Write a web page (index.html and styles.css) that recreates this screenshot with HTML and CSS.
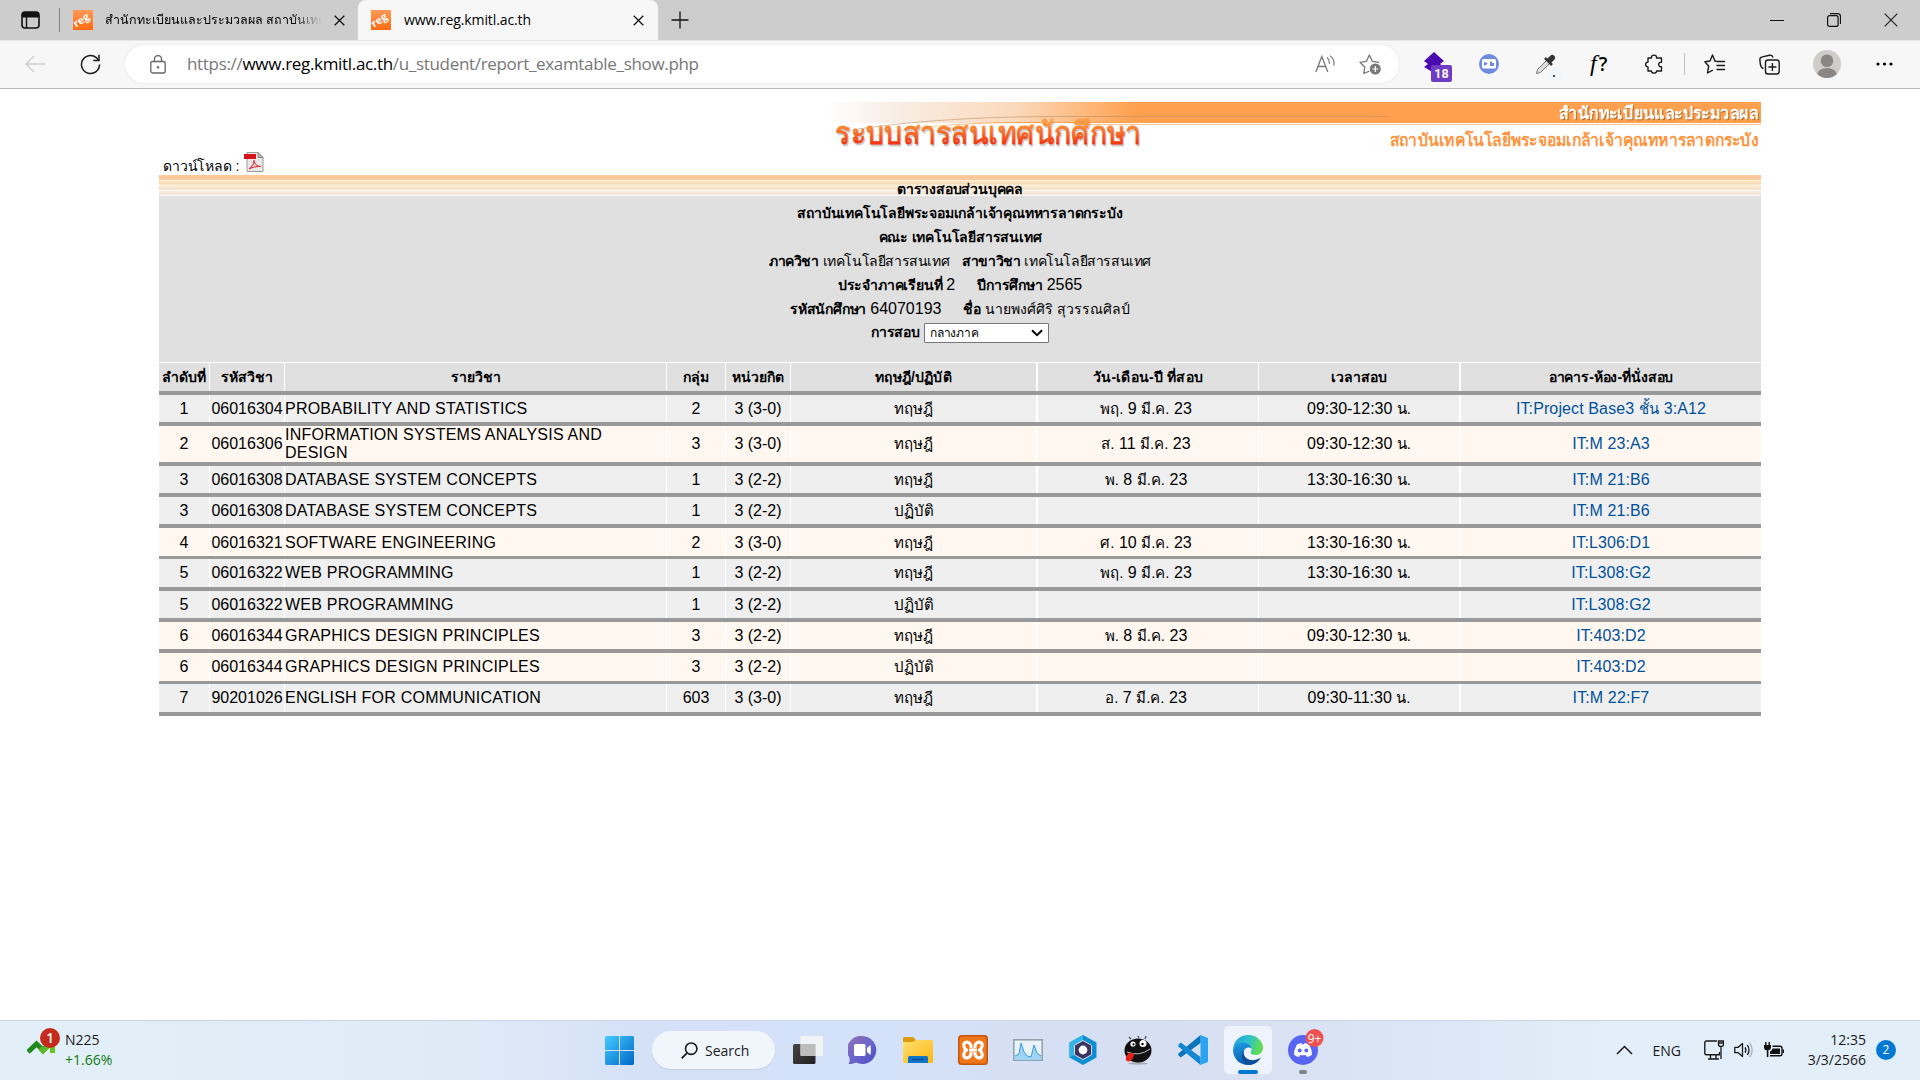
FILE: index.html
```html
<!DOCTYPE html>
<html lang="th">
<head>
<meta charset="utf-8">
<title>www.reg.kmitl.ac.th</title>
<link rel="stylesheet" href="styles.css">
</head>
<body>
<div class="browser">
  <header class="tabstrip">
    <div class="tab-actions">
      <svg width="19" height="18" viewBox="0 0 19 18"><rect x="1" y="1" width="17" height="16" rx="3" fill="none" stroke="#111" stroke-width="1.6"/><path d="M1 4a3 3 0 0 1 3-3h11a3 3 0 0 1 3 3v2.500H1z" fill="#111"/><path d="M5.500 6v11" stroke="#111" stroke-width="1.400"/></svg>
    </div>
    <div class="tab">
      <svg class="favicon" width="20" height="20" viewBox="0 0 20 20"><rect width="20" height="20" fill="url(#fav)"/><text x="1.500" y="15.500" transform="rotate(-32 6 14)" font-family="Open Sans, sans-serif" font-size="10.500" font-weight="700" fill="#fff">reg</text></svg>
      <span class="tab-title faded">สำนักทะเบียนและประมวลผล สถาบันเทคโน</span>
      <svg class="x" width="11" height="11" viewBox="0 0 11 11"><path d="M.7.700l9.600 9.600M10.300.700L.700 10.300" stroke="#111" stroke-width="1.300"/></svg>
    </div>
    <div class="tab active">
      <svg class="favicon" width="20" height="20" viewBox="0 0 20 20"><defs><linearGradient id="fav" x1="0" y1="0" x2="0" y2="1"><stop offset="0" stop-color="#ff9a58"/><stop offset="1" stop-color="#ff6a10"/></linearGradient></defs><rect width="20" height="20" fill="url(#fav)"/><text x="1.500" y="15.500" transform="rotate(-32 6 14)" font-family="Open Sans, sans-serif" font-size="10.500" font-weight="700" fill="#fff">reg</text></svg>
      <span class="tab-title">www.reg.kmitl.ac.th</span>
      <svg class="x" width="11" height="11" viewBox="0 0 11 11"><path d="M.7.700l9.600 9.600M10.300.700L.700 10.300" stroke="#111" stroke-width="1.300"/></svg>
    </div>
    <svg class="newtab" width="18" height="18" viewBox="0 0 18 18"><path d="M9 .5v17M.5 9h17" stroke="#111" stroke-width="1.300"/></svg>
    <div class="winctl">
      <svg width="14" height="14" viewBox="0 0 14 14"><path d="M0 7.500h14" stroke="#111"/></svg>
      <svg width="14" height="14" viewBox="0 0 14 14"><rect x=".6" y="2.600" width="10.500" height="10.800" rx="2" fill="none" stroke="#111" stroke-width="1.200"/><path d="M3 .7h7.500a3 3 0 0 1 3 3V11" fill="none" stroke="#111" stroke-width="1.200"/></svg>
      <svg width="14" height="14" viewBox="0 0 14 14"><path d="M.7.700l12.600 12.600M13.300.700L.700 13.300" stroke="#222" stroke-width="1.200"/></svg>
    </div>
  </header>
  <nav class="toolbar">
    <svg class="back" width="20" height="18" viewBox="0 0 20 18"><path d="M9 1L1 9l8 8M1 9h19" fill="none" stroke="#cfcfcf" stroke-width="1.400"/></svg>
    <svg class="reload" width="21" height="21" viewBox="0 0 21 21"><path d="M19.500 10.500a9 9 0 1 1-3.200-6.900L18.500 6" fill="none" stroke="#1a1a1a" stroke-width="1.500"/><path d="M19 .8v5.700h-5.700" fill="none" stroke="#1a1a1a" stroke-width="1.500"/></svg>
    <div class="address">
      <svg class="lock" width="16" height="19" viewBox="0 0 16 19"><rect x=".8" y="6.500" width="14.400" height="11.500" rx="2" fill="none" stroke="#666" stroke-width="1.300"/><path d="M4.500 6.500V4a3.500 3.500 0 0 1 7 0v2.500" fill="none" stroke="#666" stroke-width="1.300"/><circle cx="8" cy="12.300" r="1.200" fill="#666"/></svg>
      <span class="url">https://<b>www.reg.kmitl.ac.th</b>/u_student/report_examtable_show.php</span>
      <svg class="aloud" width="20" height="18" viewBox="0 0 20 18"><path d="M.8 17L6.800 1.500 12.800 17M3 11.500h7.700" fill="none" stroke="#777" stroke-width="1.300"/><path d="M12 2.500c2 1.700 2.700 4 2.300 6.300M15 .6c3.500 2.800 4.600 6.300 3.800 10" fill="none" stroke="#777" stroke-width="1.200"/></svg>
      <svg class="addfav" width="23" height="21" viewBox="0 0 23 21"><path d="M10.500 17L4.800 19.500l.9-6.500L1 8.300l6.500-1L10.300 1l3 6.300 6.700 1" fill="none" stroke="#777" stroke-width="1.300" stroke-linejoin="round"/><circle cx="16.300" cy="15" r="5.500" fill="#777"/><path d="M16.300 12v6M13.300 15h6" stroke="#fff" stroke-width="1.200"/></svg>
    </div>
    <svg class="e1" width="28" height="30" viewBox="0 0 28 30"><path d="M0 9l10-9 10 9-4 3 4 3-10 6-10-6 4-3z" fill="#4a0ab0"/><rect x="7" y="13" width="21" height="17" rx="2" fill="#6f3cc4"/><text x="17.500" y="26.300" text-anchor="middle" font-family="Roboto, sans-serif" font-size="12.500" font-weight="700" fill="#fff">18</text></svg>
    <svg class="e2" width="20" height="20" viewBox="0 0 20 20"><circle cx="10" cy="10" r="10" fill="#6f8be0"/><rect x="3" y="5" width="14" height="9.500" rx="1.500" fill="#fff"/><path d="M5 7.500l4 2.300-4 2.300zM11 7.500h2v1.500h2v3h-4z" fill="#6f8be0"/></svg>
    <svg class="e3" width="27" height="27" viewBox="0 0 27 27"><path d="M1.500 19.500l1-4 9.500-9.500 3 3-9.500 9.500z" fill="#ddd" stroke="#777"/><path d="M10 4l7 7" stroke="#333" stroke-width="2.500"/><path d="M13 5.500L16 2.500a1.500 1.500 0 0 1 2.500 2.500L15.500 8z" fill="#333" stroke="#333" stroke-width="2"/><rect x="13" y="14" width="13.500" height="12.500" rx="2" fill="#f1f6fa"/><circle cx="19" cy="22" r="1" fill="#111"/></svg>
    <span class="fq"><em>f</em>?</span>
    <svg class="puzzle" width="18" height="20" viewBox="0 0 18 20"><path d="M6.500 4C5.800.2 12.200.2 11.500 4H16.500v4.300c-3.800-.5-3.800 4.900 0 4.400V17H11.500c.4 2.800-5.400 2.800-5 0H3V12.900C-.2 12.700-.2 8.300 3 8.100V4z" fill="none" stroke="#1a1a1a" stroke-width="1.400" stroke-linejoin="round"/></svg>
    <i class="sep"></i>
    <svg class="favs" width="21" height="20" viewBox="0 0 21 20"><path d="M12.500 7.300H11L8.500 1 6 7 .9 7.700l3.800 4.500L3.500 19l5.300-2.800" fill="none" stroke="#1a1a1a" stroke-width="1.400" stroke-linejoin="round"/><path d="M12.500 7.500H21M12.500 11.500H21M12.500 15.500H21" stroke="#1a1a1a" stroke-width="1.400"/></svg>
    <svg class="coll" width="21" height="21" viewBox="0 0 21 21"><path d="M4.500 14.500C2 14 1.800 12.500 1.300 10L.9 6C.700 4 1.500 3.200 3.300 2.900L10.500 1.200c2-.4 3 .3 3.500 2.300" fill="none" stroke="#1a1a1a" stroke-width="1.400"/><rect x="6.500" y="6" width="13.700" height="14" rx="2.500" fill="none" stroke="#1a1a1a" stroke-width="1.400"/><path d="M13.400 9v8M9.400 13h8" stroke="#1a1a1a" stroke-width="1.400"/></svg>
    <svg class="avatar" width="28" height="28" viewBox="0 0 28 28"><clipPath id="av"><circle cx="14" cy="14" r="14"/></clipPath><g clip-path="url(#av)"><rect width="28" height="28" fill="#cfcdca"/><circle cx="14" cy="10.800" r="6.300" fill="#8a8683"/><ellipse cx="14" cy="25" rx="10" ry="7" fill="#8a8683"/></g></svg>
    <svg class="dots" width="17" height="4" viewBox="0 0 17 4"><circle cx="2" cy="2" r="1.600"/><circle cx="8.500" cy="2" r="1.600"/><circle cx="15" cy="2" r="1.600"/></svg>
  </nav>

  <main class="page">
    <section class="banner">
      <div class="download"><span>ดาวน์โหลด :</span>
        <svg width="20" height="20" viewBox="0 0 20 20"><path d="M3 .5h11l5 5v14H3z" fill="#e8e8e8" stroke="#999"/><path d="M14 .5v5h5z" fill="#bbb" stroke="#888"/><rect x="0" y="2" width="12" height="5" fill="#d8121a"/><path d="M5 17c3-2 5-5.500 5-9 .5 4 3.500 6.500 7 6.500-4-.5-8 .5-12 2.500z" fill="none" stroke="#e03a40" stroke-width="1.200"/></svg>
      </div>
      <svg class="logo" width="933" height="60" viewBox="0 0 933 60">
        <defs>
          <linearGradient id="bar" x1="0" x2="1" y1="0" y2="0"><stop offset="0" stop-color="#fff"/><stop offset=".07" stop-color="#f8eee4"/><stop offset=".2" stop-color="#fbdabc"/><stop offset=".33" stop-color="#ffa04e"/><stop offset="1" stop-color="#ffa04e"/></linearGradient>
          <linearGradient id="ttl" x1="0" x2="0" y1="0" y2="1"><stop offset=".2" stop-color="#ff9a3c"/><stop offset=".85" stop-color="#f02a0c"/></linearGradient>
          <linearGradient id="arc" x1="0" x2="1" y1="0" y2="0"><stop offset="0" stop-color="#ffa04e" stop-opacity="0"/><stop offset=".6" stop-color="#ffa04e"/></linearGradient>
        </defs>
        <rect width="933" height="21" fill="url(#bar)"/><rect y="22" x="260" width="673" height="1" fill="#ffc793"/>
        <path d="M30 27Q120 14 240 14.500H560" fill="none" stroke="#b58a62" stroke-width=".8" opacity=".7"/>
        <path d="M0 50Q60 20 200 20.500H330" fill="none" stroke="url(#arc)" stroke-width="1.200"/>
        <text class="lt shade" x="8" y="43.500" textLength="306" lengthAdjust="spacingAndGlyphs">ระบบสารสนเทศนักศึกษา</text>
        <text class="lt face" x="7" y="42" textLength="306" lengthAdjust="spacingAndGlyphs">ระบบสารสนเทศนักศึกษา</text>
        <text class="ls" x="732" y="18" textLength="199" lengthAdjust="spacingAndGlyphs" fill="#b5671f">สำนักทะเบียนและประมวลผล</text>
        <text class="ls" x="731" y="17" textLength="199" lengthAdjust="spacingAndGlyphs" fill="#fff">สำนักทะเบียนและประมวลผล</text>
        <text class="ls" x="562" y="44" textLength="368" lengthAdjust="spacingAndGlyphs" fill="#ff9440">สถาบันเทคโนโลยีพระจอมเกล้าเจ้าคุณทหารลาดกระบัง</text>
      </svg>
    </section>
    <h1 class="title">ตารางสอบส่วนบุคคล</h1>
    <section class="info">
      <p><b>สถาบันเทคโนโลยีพระจอมเกล้าเจ้าคุณทหารลาดกระบัง</b></p>
      <p><b>คณะ เทคโนโลยีสารสนเทศ</b></p>
      <p class="dense"><b>ภาควิชา</b><span>เทคโนโลยีสารสนเทศ</span><b class="near">สาขาวิชา</b><span>เทคโนโลยีสารสนเทศ</span></p>
      <p><b>ประจำภาคเรียนที่</b><span class="num">2</span><b class="far">ปีการศึกษา</b><span class="num">2565</span></p>
      <p><b>รหัสนักศึกษา</b><span class="num">64070193</span><b class="far">ชื่อ</b><span class="name">นายพงศ์ศิริ สุวรรณศิลป์</span></p>
      <p><b>การสอบ</b><span class="select"><span>กลางภาค</span><svg width="12" height="8" viewBox="0 0 12 8"><path d="M1 1.200l5 5 5-5" fill="none" stroke="#000" stroke-width="2"/></svg></span></p>
    </section>
    <section class="table">
      <div class="row head"><span>ลำดับที่</span><span>รหัสวิชา</span><span>รายวิชา</span><span>กลุ่ม</span><span>หน่วยกิต</span><span class="wide">ทฤษฎี/ปฏิบัติ</span><span class="wide">วัน-เดือน-ปี ที่สอบ</span><span>เวลาสอบ</span><span>อาคาร-ห้อง-ที่นั่งสอบ</span></div>
      <div class="row"><span>1</span><span>06016304</span><span>PROBABILITY AND STATISTICS</span><span>2</span><span>3 (3-0)</span><span><i>ทฤษฎี</i></span><span><u><i>พฤ.</i> 9 <i>มี.ค.</i> 23</u></span><span><u>09:30-12:30 <i>น.</i></u></span><span><a>IT:Project Base3 <i>ชั้น</i> 3:A12</a></span></div>
      <div class="row tall cream"><span>2</span><span>06016306</span><span>INFORMATION SYSTEMS ANALYSIS AND DESIGN</span><span>3</span><span>3 (3-0)</span><span><i>ทฤษฎี</i></span><span><u><i>ส.</i> 11 <i>มี.ค.</i> 23</u></span><span><u>09:30-12:30 <i>น.</i></u></span><span><a>IT:M 23:A3</a></span></div>
      <div class="row"><span>3</span><span>06016308</span><span>DATABASE SYSTEM CONCEPTS</span><span>1</span><span>3 (2-2)</span><span><i>ทฤษฎี</i></span><span><u><i>พ.</i> 8 <i>มี.ค.</i> 23</u></span><span><u>13:30-16:30 <i>น.</i></u></span><span><a>IT:M 21:B6</a></span></div>
      <div class="row low"><span>3</span><span>06016308</span><span>DATABASE SYSTEM CONCEPTS</span><span>1</span><span>3 (2-2)</span><span><i>ปฏิบัติ</i></span><span></span><span></span><span><a>IT:M 21:B6</a></span></div>
      <div class="row cream low thin"><span>4</span><span>06016321</span><span>SOFTWARE ENGINEERING</span><span>2</span><span>3 (3-0)</span><span><i>ทฤษฎี</i></span><span><u><i>ศ.</i> 10 <i>มี.ค.</i> 23</u></span><span><u>13:30-16:30 <i>น.</i></u></span><span><a>IT:L306:D1</a></span></div>
      <div class="row high"><span>5</span><span>06016322</span><span>WEB PROGRAMMING</span><span>1</span><span>3 (2-2)</span><span><i>ทฤษฎี</i></span><span><u><i>พฤ.</i> 9 <i>มี.ค.</i> 23</u></span><span><u>13:30-16:30 <i>น.</i></u></span><span><a>IT:L308:G2</a></span></div>
      <div class="row"><span>5</span><span>06016322</span><span>WEB PROGRAMMING</span><span>1</span><span>3 (2-2)</span><span><i>ปฏิบัติ</i></span><span></span><span></span><span><a>IT:L308:G2</a></span></div>
      <div class="row cream low"><span>6</span><span>06016344</span><span>GRAPHICS DESIGN PRINCIPLES</span><span>3</span><span>3 (2-2)</span><span><i>ทฤษฎี</i></span><span><u><i>พ.</i> 8 <i>มี.ค.</i> 23</u></span><span><u>09:30-12:30 <i>น.</i></u></span><span><a>IT:403:D2</a></span></div>
      <div class="row cream thin"><span>6</span><span>06016344</span><span>GRAPHICS DESIGN PRINCIPLES</span><span>3</span><span>3 (2-2)</span><span><i>ปฏิบัติ</i></span><span></span><span></span><span><a>IT:403:D2</a></span></div>
      <div class="row high"><span>7</span><span>90201026</span><span>ENGLISH FOR COMMUNICATION</span><span>603</span><span>3 (3-0)</span><span><i>ทฤษฎี</i></span><span><u><i>อ.</i> 7 <i>มี.ค.</i> 23</u></span><span><u>09:30-11:30 <i>น.</i></u></span><span><a>IT:M 22:F7</a></span></div>
    </section>
  </main>
</div>

<footer class="taskbar">
  <div class="widget">
    <svg width="34" height="30" viewBox="0 0 34 30"><path d="M1 24l8.500-8 6.500 6 8-8" fill="none" stroke="#1f8a1f" stroke-width="5"/><path d="M13 20l3 3 8-8" fill="none" stroke="#5bb82a" stroke-width="5"/><path d="M17 10h11v15h-5V15h-6z" fill="#6cc51e"/><circle cx="23" cy="10" r="10" fill="#c42b1c"/><text x="23" y="15" text-anchor="middle" font-family="Open Sans, sans-serif" font-size="13.500" font-weight="600" fill="#fff">1</text></svg>
    <div class="quote"><span>N225</span><span class="up">+1.66%</span></div>
  </div>
  <div class="apps">
    <svg class="a-win" width="29" height="29" viewBox="0 0 29 29"><defs><linearGradient id="wn" x1="0" y1="0" x2="1" y2="1"><stop offset="0" stop-color="#45cbff"/><stop offset="1" stop-color="#0067c8"/></linearGradient></defs><path d="M1 0h13v14H0V1zM15 0h13l1 1v13H15zM0 15h14v14H1l-1-1zM15 15h14v13l-1 1H15z" fill="url(#wn)"/></svg>
    <div class="search"><svg width="17" height="17" viewBox="0 0 17 17"><circle cx="10.200" cy="6.700" r="5.700" fill="none" stroke="#1a1a1a" stroke-width="1.600"/><path d="M6.200 10.800L.7 16.300" stroke="#1a1a1a" stroke-width="1.800"/></svg><span>Search</span></div>
    <svg class="a-task" width="30" height="28" viewBox="0 0 30 28"><defs><linearGradient id="tk" x1="0" y1="0" x2="1" y2="1"><stop offset="0" stop-color="#444"/><stop offset="1" stop-color="#222"/></linearGradient></defs><rect y="8" width="22.500" height="20" rx="1.500" fill="url(#tk)"/><rect x="7.500" y="0" width="22.500" height="20" rx="1.500" fill="#f4f4f4" opacity=".92"/><path d="M7.500 8h15v12h-15z" fill="#bdbdbd"/></svg>
    <svg class="a-chat" width="29" height="29" viewBox="0 0 29 29"><defs><linearGradient id="ch" x1="0" y1="0" x2="1" y2="1"><stop offset="0" stop-color="#9a6fb0"/><stop offset=".5" stop-color="#6a67cc"/><stop offset="1" stop-color="#4b4bc4"/></linearGradient></defs><path d="M14.500 0a14 14 0 1 1-6.500 26.500c-2.500 1.300-5 1.800-7.500 1.300 1.300-2 1.500-4 .8-6.300A14 14 0 0 1 14.500 0z" fill="url(#ch)"/><rect x="6" y="8" width="11.500" height="12" rx="1.500" fill="#fff"/><path d="M19 12l3.500-3q.8 5 0 10L19 16z" fill="#fff"/></svg>
    <svg class="a-fold" width="30" height="27" viewBox="0 0 30 27"><defs><linearGradient id="fd" x1="0" y1="0" x2="1" y2="1"><stop offset="0" stop-color="#ffdf70"/><stop offset="1" stop-color="#fcb714"/></linearGradient></defs><path d="M0 1.500Q0 0 1.500 0H10l3 3h16v6H0z" fill="#dd9c0c"/><path d="M0 5h9.500L13 3h15.500Q30 3 30 4.500V24.500Q30 26 28.500 26H1.500Q0 26 0 24.500z" fill="url(#fd)"/><path d="M5 26v-5.500Q5 19 6.500 19h17Q25 19 25 20.500V26z" fill="#0d74c8"/><path d="M9 22.500h12" stroke="#084a90" stroke-width="1.300"/></svg>
    <svg class="a-xampp" width="30" height="30" viewBox="0 0 30 30"><rect width="30" height="30" rx="3.500" fill="#c4560e"/><rect x="1.500" y="1.500" width="27" height="27" rx="2.500" fill="#f0761c"/><path d="M13 13C14 5.500 4 5.500 6 11.500Q6.500 14 8.500 15 6.500 16 6 18.500C4 24.500 14 24.500 13 17M17 13C16 5.500 26 5.500 24 11.500Q23.500 14 21.500 15 23.500 16 24 18.500C26 24.500 16 24.500 17 17M11 15h8" fill="none" stroke="#fff" stroke-width="3.200" stroke-linejoin="round"/></svg>
    <svg class="a-perf" width="30" height="22" viewBox="0 0 30 22"><rect x=".8" y=".8" width="28.400" height="20.400" fill="#eaf3fa" stroke="#93a3b0" stroke-width="1.600"/><path d="M2 17l4-2 2-11 3 9 3 4 4 1 3-12 3 8 4 3v4H2z" fill="#9fd4f5"/><path d="M2 17l4-2 2-11 3 9 3 4 4 1 3-12 3 8 4 3" fill="none" stroke="#3b9bdc"/></svg>
    <svg class="a-hex" width="28" height="30" viewBox="0 0 28 30"><path d="M14 0l13.500 7.500v15L14 30 .5 22.500v-15z" fill="#0c8fd0"/><path d="M14 0L.5 7.500v15L8 18.500v-7L14 8z" fill="#35b4e8"/><path d="M14 5.500l8.500 4.800v9.400L14 24.500l-8.500-4.800v-9.400z" fill="#3a3560" stroke="#d8dcf0" stroke-width="1"/><circle cx="14" cy="15" r="4.400" fill="#fff"/></svg>
    <svg class="a-imp" width="28" height="30" viewBox="0 0 28 30"><ellipse cx="14" cy="28.500" rx="10" ry="1.200" fill="#888" opacity=".6"/><ellipse cx="14" cy="15.500" rx="13.500" ry="12" fill="#111"/><path d="M5 2l2 2M14 1l1 2M22 1l-1 3" stroke="#444" stroke-width="1.200"/><circle cx="9" cy="9" r="2.600" fill="#fff"/><circle cx="19" cy="8.500" r="3.500" fill="#fff"/><circle cx="9.500" cy="9.300" r="1.100"/><circle cx="18.500" cy="9" r="1.200"/><path d="M3 17q12 5 23-3" fill="none" stroke="#bbb" stroke-width="1"/><path d="M5.500 17.500q3 .8 4.500 1c-.3 4.500-2.500 8.500-6 8-3.500-.8-3-5 1.500-9z" fill="#e8201c"/></svg>
    <svg class="a-code" width="30" height="30" viewBox="0 0 30 30"><path d="M22.500 0L30 3v24l-7.500 3z" fill="#2aa4f0"/><path d="M22.500 8L2.800 22.500.3 20.300V18.500L22.500 0z" fill="#0a74bd"/><path d="M22.500 22L2.800 7.500.3 9.700v1.800L22.500 30z" fill="#1387d3"/></svg>
    <div class="tile"><svg width="30" height="30" viewBox="0 0 30 30"><defs><linearGradient id="e1" x1="0" y1="0" x2="1" y2=".3"><stop offset="0" stop-color="#1f9bdc"/><stop offset=".55" stop-color="#2fc2cf"/><stop offset="1" stop-color="#5fdc54"/></linearGradient><linearGradient id="e2" x1="0" y1="0" x2=".3" y2="1"><stop offset="0" stop-color="#1f9de4"/><stop offset="1" stop-color="#0b5cae"/></linearGradient></defs><path d="M0 14C1 5 7.500 0 15 0c9 0 15 6.500 15 12.500 0 5-3.500 7.500-7.500 7.500-3.500 0-5-1.500-5-2.500 0-.8 1.200-1.500 1.200-3.500C18.700 11 15 8 10.500 8 5.500 8 1.500 10.500 0 14z" fill="url(#e1)"/><path d="M0 14.500C1 10 5.500 7.500 10 7.500c5 0 8.700 3 8.700 6.500-1-2-6-2.500-7.700 1.500-2.500 7 6.500 13.500 15.500 8.500C24 28 20 30 15 30 6.500 30 0 23.500 0 14.500z" fill="url(#e2)"/><path d="M11 15.500C8.500 22.500 17.500 29 28 22.500 24 29 17 31 13 29 8 26.500 7.500 19 11 15.500z" fill="#0d4f9a"/></svg><i></i></div>
    <div class="discord"><svg width="36" height="36" viewBox="0 0 36 36"><circle cx="15" cy="21" r="15" fill="#5865f2"/><path d="M9 15.500q2.500-1.300 4.300-1.500l.6 1.200h2.200l.6-1.200q1.800.2 4.300 1.500 3 5 3 10-2 2-5 2.500l-1.200-2q-2.800.7-5.600 0L11 28q-3-.5-5-2.500 0-5 3-10z" fill="#fff"/><circle cx="11.700" cy="21.500" r="2" fill="#5865f2"/><circle cx="18.300" cy="21.500" r="2" fill="#5865f2"/><circle cx="26.500" cy="9" r="9" fill="#f05050"/><text x="26.500" y="13.500" text-anchor="middle" font-family="Open Sans, sans-serif" font-size="12" fill="#fff">9+</text></svg><i></i></div>
  </div>
  <div class="tray">
    <svg class="chev" width="17" height="10" viewBox="0 0 17 10"><path d="M1 9l7.500-7.500L16 9" fill="none" stroke="#1a1a1a" stroke-width="1.500"/></svg>
    <span class="eng">ENG</span>
    <svg class="net" width="20" height="20" viewBox="0 0 20 20"><path d="M13 1H2.500Q.8 1 .8 2.700V13Q.8 14.800 2.500 14.800H15.500V12M6.500 15v3.500M12 15v3.500M4 19h11" fill="none" stroke="#1a1a1a" stroke-width="1.400"/><path d="M14.500 1h5v3.500q0 2-2.500 2t-2.500-2zM14.500 3h5M17 6.500V19" fill="none" stroke="#1a1a1a" stroke-width="1.300"/></svg>
    <svg class="vol" width="20" height="18" viewBox="0 0 20 18"><path d="M.8 6.300h3.500L8.500 2.500v13l-4.200-3.800H.8z" fill="none" stroke="#1a1a1a" stroke-width="1.300" stroke-linejoin="round"/><path d="M11 6.300q1.800 2.700 0 5.400M13.300 4q3.500 5 0 10" fill="none" stroke="#1a1a1a" stroke-width="1.300"/><path d="M15.700 1.800q5 7.200 0 14.400" fill="none" stroke="#aab" stroke-width="1.200"/></svg>
    <svg class="bat" width="20" height="16" viewBox="0 0 20 16"><path d="M1.800 0v3M5.200 0v3" stroke="#111" stroke-width="1.400"/><path d="M0 3h7v2.500q0 2.500-2.600 2.800V15H2.800V8.300Q0 8 0 5.500z" fill="#111"/><path d="M8.500 4.200H16q2 0 2 2v5.600q0 2-2 2H6" fill="none" stroke="#111" stroke-width="1.400"/><path d="M8.500 6.500H16v5.500H6V9.500q2.500-1 2.500-3z" fill="#111"/><path d="M19.300 7.500v3.500" stroke="#111" stroke-width="1.500"/></svg>
    <div class="clock"><span>12:35</span><span>3/3/2566</span></div>
    <span class="badge">2</span>
  </div>
</footer>
</body>
</html>
```
FILE: styles.css
```css
* { box-sizing: border-box; }
body { margin: 0; background: #fff; font-family: "Liberation Sans", sans-serif; font-size: 16px; color: #000; }
svg { flex: none; display: block; }
.browser { height: 1020px; display: flex; flex-direction: column; overflow: hidden; }

/* tab strip */
.tabstrip { height: 40px; background: #cdcdcd; display: flex; align-items: center; font: 14px "Open Sans", sans-serif; }
.tab-actions { width: 60px; height: 24px; padding: 3px 0 0 21px; border-right: 1px solid #888; }
.tab { width: 298px; height: 40px; display: flex; align-items: center; padding: 0 13px 0 13px; }
.tab.active { width: 300px; background: #f7f7f7; border-radius: 8px 8px 0 0; padding-right: 14px; }
.tab-title { flex: 1; margin: -1px 12px 0; white-space: nowrap; overflow: hidden; letter-spacing: -0.1px; }
.active .tab-title { margin-left: 13px; }
.faded { font-size: 12.5px; line-height: 22px; letter-spacing: 0; mask-image: linear-gradient(to right, #000 86%, transparent); }
.newtab { margin-left: 13px; }
.winctl { margin-left: auto; display: flex; gap: 43px; margin-right: 22px; }

/* toolbar */
.toolbar { height: 49px; background: #f7f7f7; border-top: 1px solid #e6e6e6; border-bottom: 1px solid #bbb; display: flex; align-items: center; padding: 0 0 1px 25px; }
.reload { margin-left: 35px; }
.address { margin-left: 24px; width: 1274px; height: 38px; border-radius: 19px; background: #fff; display: flex; align-items: center; padding-left: 25px; box-shadow: 0 0 3px #e4e4e4; }
.url { font: 17px "Open Sans", sans-serif; letter-spacing: -0.32px; margin: -2px 0 0 21px; color: #777; }
.url b { font-weight: 400; color: #000; }
.aloud { margin-left: auto; }
.addfav { margin: 0 17px 0 24px; }
.e1 { margin: 6px 0 0 25px; }
.e2 { margin-left: 27px; }
.e3 { margin: 7px 0 0 36px; }
.fq { margin: -2px 0 0 28px; width: 20px; font: 600 19px/24px "Open Sans", sans-serif; white-space: nowrap; }
.fq em { font: italic 24px/24px "Liberation Serif", serif; margin-right: 2px; }
.puzzle { margin-left: 35px; }
.sep { width: 1px; height: 22px; background: #c4c4c4; margin-left: 21px; }
.favs { margin-left: 19px; }
.coll { margin-left: 34px; }
.avatar { margin-left: 33px; }
.dots { margin-left: 35px; }

/* page */
.page { width: 1602px; margin: 0 auto; padding-top: 13px; }
.banner { height: 73px; display: flex; justify-content: space-between; }
.download { display: flex; align-items: flex-start; gap: 5px; padding: 50px 0 0 4px; font-size: 14px; letter-spacing: -0.15px; line-height: 28px; }
.lt { font-size: 31px; stroke-width: .8px; }
.lt.face { fill: url(#ttl); stroke: url(#ttl); }
.lt.shade { fill: #999; stroke: #999; opacity: .5; }
.ls { font-size: 17px; font-weight: 700; }
.title { height: 21px; margin: 0; text-align: center; font-size: 14px; line-height: 28px; letter-spacing: -0.2px;
  background:
    linear-gradient(#ffc99b, #ffc99b) 0 0 / 100% 5px no-repeat,
    repeating-linear-gradient(rgba(255,255,255,.55) 0 1px, transparent 1px 3px, rgba(220,160,90,.16) 3px 4px, transparent 4px 5px),
    linear-gradient(#fde0b8 5px, #f3efea 20px); }
.info { background: #e0e0e0; height: 166px; padding-top: 5px; }
.info p { margin: 0; height: 24px; line-height: 24px; display: flex; justify-content: center; align-items: baseline; gap: 4px; font-size: 14px; letter-spacing: -0.2px; }
.info p:nth-child(n+5) { height: 23px; }
.info .dense { letter-spacing: -0.4px; }
.info .num { font-size: 16px; letter-spacing: 0; }
.info .name { letter-spacing: 0; }
.info .near { margin-left: 9px; }
.info .far { margin-left: 18px; }
.select { width: 125px; height: 20px; border: 1px solid #767676; border-radius: 1px; background: #fff; display: flex; justify-content: space-between; align-items: center; padding: 0 5px; line-height: 18px; font-size: 12px; }

/* exam table */
.row { display: grid; grid-template-columns: 50px 75px 382px 59px 65px 246px 222px 201px 302px; height: 31px; border-bottom: 4px solid #999; background: #efefef; line-height: 18px; }
.row > span { display: flex; align-items: center; justify-content: center; border-left: 1px solid #fff; }
.row > span:first-child { border-left: 0; }
.row > span:nth-child(7), .row > span:nth-child(9) { border-left-width: 2px; }
.row > span:nth-child(7) { padding-right: 4px; }
.row > span:nth-child(3) { justify-content: flex-start; letter-spacing: .23px; padding-right: 40px; }
.row i { font-style: normal; font-size: 15px; }
.row u { text-decoration: none; }
.row a { color: #00519c; letter-spacing: .12px; }
.row.head { height: 33px; font-size: 14px; font-weight: 700; letter-spacing: -0.1px; background: #e0e0e0; border-top: 1px solid #fff; }
.row.head > span:nth-child(3) { justify-content: center; padding: 0; letter-spacing: 0; }
.row.head > span.wide { letter-spacing: .2px; padding: 0; }
.row.tall { height: 40px; }
.row.cream { background: #fff7f0; }
.row.low > span { padding-top: 1px; }
.row.thin { border-bottom-width: 3px; }
.row.high { height: 32px; }

/* taskbar */
.taskbar { height: 60px; display: flex; align-items: center; border-top: 1px solid #c9d6e2; padding-bottom: 1px; font: 14px "Open Sans", sans-serif; color: #1a1a1a;
  background: linear-gradient(90deg, #e3eff8 0, #dfeaf7 25%, #d5e1f7 33%, #d4e2f9 45%, #d7dff2 60%, #dbe4f4 72%, #e2eef9 84%, #e2eef8 100%); }
.widget { width: 605px; display: flex; align-items: flex-start; padding-left: 27px; gap: 4px; }
.widget svg { margin-top: -2px; }
.quote { display: flex; flex-direction: column; line-height: 20px; }
.up { color: #107c10; }
.apps { display: flex; align-items: center; height: 58px; }
.search { margin: 0 18px; width: 123px; height: 38px; border-radius: 19px; background: #f1f6fd; display: flex; align-items: center; gap: 7px; padding-left: 29px; box-shadow: 0 1px 1px #c3cfe2; }
.a-chat { margin-left: 25px; }
.a-fold { margin-left: 26px; }
.a-xampp { margin-left: 25px; }
.a-perf { margin-left: 25px; }
.a-hex { margin-left: 26px; }
.a-imp { margin-left: 27px; }
.a-code { margin-left: 26px; }
.tile { margin-left: 16px; width: 48px; height: 48px; border-radius: 5px; background: #eef3fc; display: flex; flex-direction: column; align-items: center; padding-top: 9px; }
.tile i { width: 20px; height: 4px; border-radius: 2px; background: #0078d4; margin-top: 5px; }
.discord { margin-left: 16px; display: flex; flex-direction: column; height: 48px; padding-top: 3px; }
.discord i { width: 8px; height: 4px; border-radius: 2px; background: #7c828c; margin: 5px 0 0 11px; }
.tray { margin-left: auto; display: flex; align-items: center; padding-right: 24px; }
.eng { margin-left: 20px; }
.net { margin-left: 23px; }
.vol { margin-left: 10px; }
.bat { margin-left: 10px; }
.clock { width: 82px; display: flex; flex-direction: column; text-align: right; line-height: 20px; }
.badge { margin-left: 10px; width: 20px; height: 20px; border-radius: 10px; background: #0078d4; color: #fff; font-size: 12px; line-height: 20px; text-align: center; }
```
